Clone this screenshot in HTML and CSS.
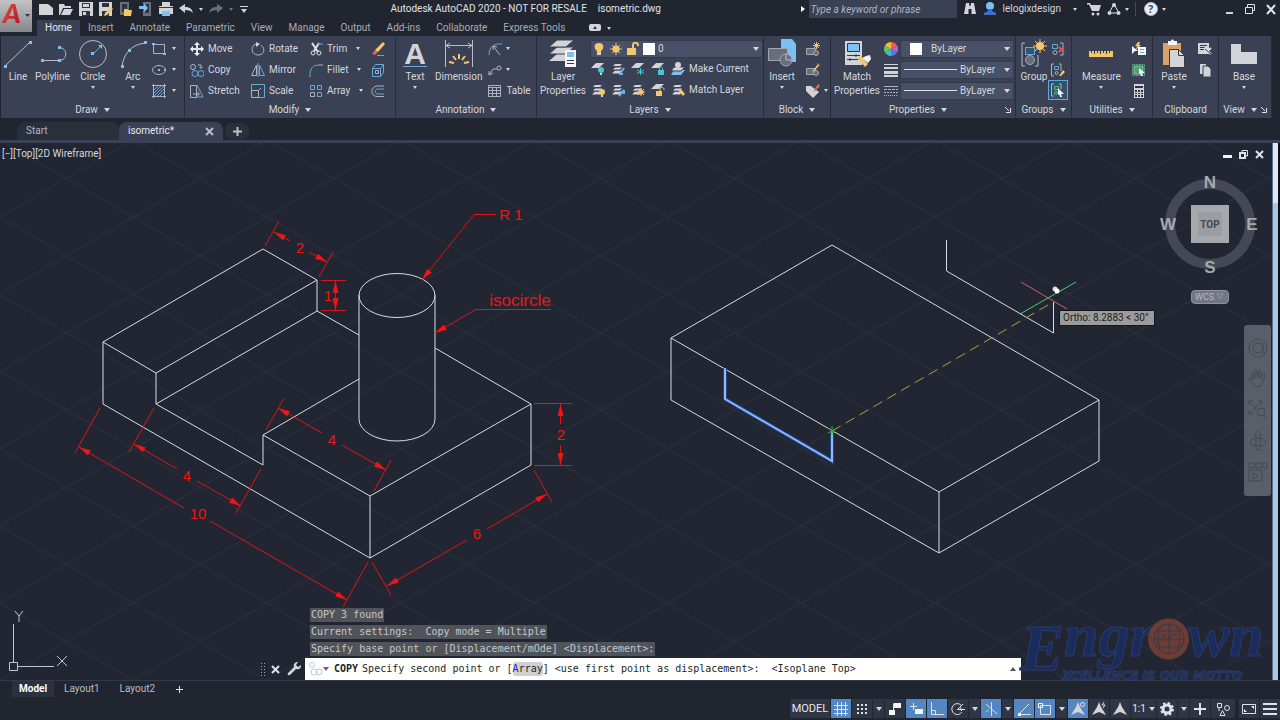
FILE: index.html
```html
<!DOCTYPE html>
<html lang="en">
<head>
  <meta charset="UTF-8">
  <meta name="viewport" content="width=device-width, initial-scale=1.0">
  <title>Autodesk AutoCAD 2020 - isometric.dwg</title>
  <link rel="stylesheet" href="styles.css">
</head>
<body>
  <!-- shared shapes -->
  <svg class="defs" width="0" height="0" aria-hidden="true">
    <defs>
      <linearGradient id="logoRed" x1="0" y1="0" x2="1" y2="1">
        <stop offset="0" stop-color="#f0554e"/><stop offset="1" stop-color="#a81218"/>
      </linearGradient>
      <symbol id="stack" viewBox="0 0 14 14">
        <path class="fg" d="M4 8.500h8l-3 3H1z"/><path class="fg st" d="M4 5h8l-3 3H1z"/><path class="fg st" d="M4 1.500h8l-3 3H1z"/>
      </symbol>
      <symbol id="sheet" viewBox="0 0 14 14"><path class="fg" d="M5 1h8L8 6H0z"/></symbol>
      <symbol id="tri" viewBox="0 0 14 14"><path class="fg" d="M7 0l2 5 5 8-7-3-7 3 5-8z"/></symbol>
    </defs>
  </svg>

  <div class="app">
    <header class="header">
      <button class="app-menu" aria-label="Application menu">
        <svg width="32" height="32"><text x="3" y="23" class="logo-a">A</text><path class="fd" d="M25 14h5l-2.500 3z"/></svg>
      </button>
      <div class="header-main">
        <div class="titlebar">
          <div class="quick-access">
            <button aria-label="New"><svg class="i" viewBox="0 0 14 14"><path class="fg" d="M0 2h9l5 4v7H0z"/></svg></button>
            <button aria-label="Open"><svg class="i" viewBox="0 0 14 14"><path class="fg" d="M0 2h5l1 2h6v2H4L1 13H0z"/><path class="fg" d="M5 7h9l-3 6H2z"/></svg></button>
            <button aria-label="Save"><svg class="i" viewBox="0 0 14 14"><path class="fg" d="M0 0h14v14H0z"/><path class="fd" d="M3 1h8v5H3zM3 9h8v5H3z"/><path class="fg" d="M4 10h3v3H4zM4 2h6v3H4z"/></svg></button>
            <button aria-label="Save as"><svg class="i" viewBox="0 0 14 14"><path class="fg" d="M0 0h13v14H0z"/><path class="fd" d="M3 1h7v4H3zM3 9h7v5H3z"/><path class="fy" d="M12 5l2 2-6 6-3 1 1-3z"/></svg></button>
            <button aria-label="Open from mobile"><svg class="i" viewBox="0 0 14 14"><path class="fm" d="M1 0h9v13H1z"/><path class="fd" d="M3 2h5v8H3z"/><path class="fy" d="M5 7h3l1 1h4l-1 6H5z"/></svg></button>
            <button aria-label="Save to mobile"><svg class="i" viewBox="0 0 14 14"><path class="fm" d="M4 0h8v14H4z"/><path class="fd" d="M6 2h4v9H6z"/><path class="fb" d="M0 4h5V1l4 5-4 4V7H0z"/></svg></button>
            <button aria-label="Plot"><svg class="i" viewBox="0 0 14 14"><path class="fg" d="M3 0h8v4h3v8H0V4h3z"/><path class="sd" d="M0 5.500h14"/><path class="fb" d="M3 9h8v5H3z"/></svg></button>
            <button aria-label="Undo"><svg class="i" viewBox="0 0 14 14"><path class="fg" d="M0 6l6-4v3c5 0 7 2 8 6-2-2-4-3-8-3v3z"/></svg></button>
            <i class="caret"></i>
            <button aria-label="Redo"><svg class="i" viewBox="0 0 14 14"><path class="fm" d="M14 6L8 2v3C3 5 1 7 0 11c2-2 4-3 8-3v3z"/></svg></button>
            <i class="caret dim"></i>
            <button class="slim" aria-label="Customize"><svg class="i" viewBox="0 0 14 14"><path class="fg" d="M3 4h8v1H3zM4 7h6l-3 4z"/></svg></button>
          </div>
          <div class="title"><span>Autodesk AutoCAD 2020 - NOT FOR RESALE</span><span>isometric.dwg</span></div>
          <div class="info-center">
            <i class="play"></i>
            <input class="search" type="text" placeholder="Type a keyword or phrase" aria-label="Search help">
            <button aria-label="Search"><svg class="i" viewBox="0 0 14 14"><path class="fg" d="M3 1h3l.500 3h1L8 1h3l2 11H8.500V7h-3v5H1z"/></svg></button>
            <button class="account"><svg class="i" viewBox="0 0 14 14"><circle class="fb" cx="7" cy="4" r="4"/><path class="fu" d="M5 7h4v2l4 2v2H1v-2l4-2z"/></svg>lelogixdesign<i class="caret"></i></button>
            <button aria-label="App store"><svg class="i" viewBox="0 0 14 14"><path class="fg" d="M0 1h3l1 2h10l-2 6H5L2 2.500H0z"/><circle class="fg" cx="6" cy="12" r="1.500"/><circle class="fg" cx="11" cy="12" r="1.500"/></svg></button>
            <button aria-label="Stay connected"><svg class="i" viewBox="0 0 14 14"><path class="w" d="M7 2l5 9H2z"/><circle class="fg" cx="7" cy="3" r="2"/><circle class="fg" cx="2.500" cy="11" r="2"/><circle class="fg" cx="11.500" cy="11" r="2"/></svg></button>
            <i class="caret"></i><i class="rule"></i>
            <button aria-label="Help"><svg class="i" viewBox="0 0 14 14"><circle cx="7" cy="7" r="6.500" fill="#e9edf5"/><text class="q" x="4" y="11">?</text></svg></button>
            <i class="caret"></i>
          </div>
          <div class="window-controls">
            <button aria-label="Minimize"><svg class="i" viewBox="0 0 14 14"><path class="fg" d="M4 10h7v2H4z"/></svg></button>
            <button aria-label="Restore"><svg class="i" viewBox="0 0 14 14"><path class="w" d="M4.500 5V2.500h7v6H10M2.500 5.500h7v6h-7z"/></svg></button>
            <button aria-label="Close"><svg class="i" viewBox="0 0 14 14"><path class="w2" d="M3 3l8 9M11 3l-8 9"/></svg></button>
          </div>
        </div>
        <nav class="menu">
          <button class="active">Home</button><button>Insert</button><button>Annotate</button><button>Parametric</button><button>View</button><button>Manage</button><button>Output</button><button>Add-ins</button><button>Collaborate</button><button>Express Tools</button>
          <button class="minimize" aria-label="Minimize ribbon"><svg width="12" height="8"><rect class="fg" width="12" height="7" rx="2"/><path class="fd" d="M4 5l2-3 2 3z"/></svg><i class="caret"></i></button>
        </nav>
      </div>
    </header>

    <section class="ribbon">
      <div class="panel draw">
        <div class="tools">
          <button class="big"><svg class="ib" viewBox="0 0 30 30"><path d="M2 28L27 4"/><path class="fb" d="M1 27h3v3H1zM26 3h3v3h-3z"/></svg>Line</button>
          <button class="big"><svg class="ib" viewBox="0 0 30 30"><path d="M5 22.500h17c9 0 9-13 0-13"/><path class="fb" d="M4 21h3v3H4zM21 21h3v3h-3zM21 8h3v3h-3z"/></svg>Polyline</button>
          <button class="big wide"><svg class="ib" viewBox="0 0 30 30"><circle cx="15" cy="16" r="13.500"/><path class="b" d="M15 16l8-8"/><path class="fb" d="M13 14h3v3h-3zM20 7h4v4z"/></svg>Circle<i class="caret"></i></button>
          <button class="big"><svg class="ib" viewBox="0 0 30 30"><path d="M4 28C6 15 14 6 28 5"/><path class="fb" d="M3 27h3v3H3zM10 11h3v3h-3zM26 3h3v3h-3z"/></svg>Arc<i class="caret"></i></button>
          <div class="stack">
            <button class="small" aria-label="Rectangle"><svg class="i" viewBox="0 0 14 14"><path d="M1.500 2.500h11v9h-11z"/><path class="fb" d="M0 1h3v2H0zM11 11h3v2h-3z"/></svg><i class="caret"></i></button>
            <button class="small" aria-label="Ellipse"><svg class="i" viewBox="0 0 14 14"><ellipse cx="7" cy="7" rx="6.500" ry="4.500"/><path class="fb" d="M6 6h2v2H6zM12 6h2v2h-2zM6 2h2v1H6z"/></svg><i class="caret"></i></button>
            <button class="small" aria-label="Hatch"><svg class="i" viewBox="0 0 14 14"><path d="M1.500 0v14M12.500 0v14M0 1.500h14M0 12.500h14"/><path class="b" d="M2 6l4-4M2 9l7-7M2 12l10-10M5 12l7-7M8 12l4-4"/></svg><i class="caret"></i></button>
          </div>
        </div>
        <button class="panel-title">Draw<i class="caret lg"></i></button>
      </div>

      <div class="panel modify">
        <div class="tools">
          <div class="stack c1">
            <button class="small"><svg class="i" viewBox="0 0 14 14"><path class="w2" d="M7 1v12M1 7h12"/><path class="fw" d="M7 0l3 3H4zM7 14l3-3H4zM0 7l3-3v6zM14 7l-3-3v6z"/></svg>Move</button>
            <button class="small"><svg class="i" viewBox="0 0 14 14"><circle cx="3" cy="4" r="2.500"/><path d="M8 2h3v3M9.500 4L11 5.500 12.500 4"/><circle class="b" cx="5" cy="10.500" r="3"/><circle class="b" cx="11" cy="10.500" r="3"/></svg>Copy</button>
            <button class="small"><svg class="i" viewBox="0 0 14 14"><path d="M.500 1.500h6v12h-6z"/><path class="b" d="M7 1l6 12H7"/><path d="M3 10h6M7.500 8l2 2-2 2"/></svg>Stretch</button>
          </div>
          <div class="stack c2">
            <button class="small"><svg class="i" viewBox="0 0 14 14"><path d="M5 2C-1 4 0 13 7 13c6 0 8-6 3-10"/><path class="fg" d="M5 0l4 2-4 3z"/></svg>Rotate</button>
            <button class="small"><svg class="i" viewBox="0 0 14 14"><path d="M5.500 2v10.500H.500z"/><path class="b" d="M7 0v14M8.500 2v10.500h5z"/></svg>Mirror</button>
            <button class="small"><svg class="i" viewBox="0 0 14 14"><path class="b" d="M.500 7V.500h13v13H7"/><path d="M.500 6.500h7v7h-7zM7 7l3-3"/></svg>Scale</button>
          </div>
          <div class="stack c3">
            <button class="small"><svg class="i" viewBox="0 0 14 14"><path class="w2" d="M3 1l6 9M10 1L5 9"/><path class="b" d="M8 2h6"/><circle class="w" cx="4" cy="11" r="2"/><circle class="w" cx="10" cy="11" r="2"/></svg>Trim<i class="caret"></i></button>
            <button class="small"><svg class="i" viewBox="0 0 14 14"><path class="b" d="M1 13C1 5 4 2 10 2"/><path d="M1 13v1M10 2h4"/></svg>Fillet<i class="caret"></i></button>
            <button class="small"><svg class="i" viewBox="0 0 14 14"><path class="b" d="M1.500 1.500h4v4h-4zM8.500 1.500h4v4h-4zM8.500 8.500h4v4h-4z"/><path d="M1.500 8.500h4v4h-4z"/></svg>Array<i class="caret"></i></button>
          </div>
          <div class="stack">
            <button class="small" aria-label="Erase"><svg class="i" viewBox="0 0 14 14"><path class="fy" d="M12 0l2 2-7 8-3-2z"/><path class="fr" d="M4 8l3 2-3 3-3-1z"/><path class="b" d="M6 13.500h7"/></svg></button>
            <button class="small" aria-label="Explode"><svg class="i" viewBox="0 0 14 14"><path class="b" d="M1.500 5.500h8v8h-8zM1.500 5.500l3-4h8v8l-3 4M9.500 5.500l3-4"/><path d="M4.500 7.500h3v3h-3z"/></svg></button>
            <button class="small" aria-label="Offset"><svg class="i" viewBox="0 0 14 14"><path d="M13 2H6C-1 3-1 12 6 12.500h7"/><path class="b" d="M13 5H7c-4 0-4 5 0 5h6"/></svg></button>
          </div>
        </div>
        <button class="panel-title">Modify<i class="caret lg"></i></button>
      </div>

      <div class="panel annotation">
        <div class="tools">
          <button class="big"><svg class="ib" viewBox="0 0 30 30"><text class="big-a" x="15" y="26">A</text><path class="b" d="M3 28.500h24"/></svg>Text<i class="caret"></i></button>
          <button class="big"><svg class="ib" viewBox="0 0 30 30"><path d="M1.500 2v27M28.500 2v27M2 7.500h26M6 5L2 7.500 6 10M24 5l4 2.500-4 2.500"/><path class="y2" d="M15 16v5M9 18l3 4M21 18l-3 4M5 24l5 1M25 24l-5 1"/></svg>Dimension</button>
          <div class="stack">
            <button class="small" aria-label="Linear"><svg class="i" viewBox="0 0 14 14"><path class="b" d="M1 13C1 5 6 1 14 2"/><path d="M5 4l7 9M5 4v4M5 4l4 1"/></svg><i class="caret"></i></button>
            <button class="small" aria-label="Leader"><svg class="i" viewBox="0 0 14 14"><path d="M1 12l4-6h4M1 12V8M1 12l4-2"/><circle cx="11" cy="5" r="2"/></svg><i class="caret"></i></button>
            <button class="small"><svg class="i" viewBox="0 0 14 14"><path d="M.500 1.500h12v11H.500zM0 3.500h13M0 6.500h13M0 9.500h13M4.500 3v10M8.500 3v10"/></svg>Table</button>
          </div>
        </div>
        <button class="panel-title">Annotation<i class="caret lg"></i></button>
      </div>

      <div class="panel layers">
        <div class="tools">
          <button class="big"><svg class="ib" viewBox="0 0 30 30"><path class="fg" d="M9 16h17l-8 7H1z"/><path class="fg st" d="M9 9h17l-8 7H1z"/><path class="fg st" d="M9 2h17l-8 7H1z"/><path class="fw" d="M17 12h11v17H17z"/><path class="fb" d="M19 14h7v5h-7z"/><path class="sd" d="M19 22.500h7M19 25.500h7"/></svg>Layer<br>Properties</button>
          <div class="layer-tools">
            <div class="combo">
              <svg class="i" viewBox="0 0 14 14"><path class="fy" d="M7 1c6 0 5 6 2 8v2H5V9C2 7 1 1 7 1z"/><path class="fg" d="M5 11h4v2H5z"/></svg>
              <svg class="i" viewBox="0 0 14 14"><circle class="fy" cx="7" cy="7" r="3.500"/><path class="y" d="M7 1v12M1 7h12M3 3l8 8M11 3l-8 8"/></svg>
              <svg class="i" viewBox="0 0 14 14"><path class="fy" d="M1 6h9v7H1z"/><path class="y2" d="M7 6V3c0-3 5-3 5 0v1"/></svg>
              <i class="swatch"></i>
              <select aria-label="Layer"><option>0</option></select><i class="caret lg"></i>
            </div>
            <div class="icon-row">
              <button aria-label="Layer off"><svg class="i" viewBox="0 0 14 14"><use href="#sheet"/><circle class="fc" cx="10" cy="8" r="3"/><path class="fg" d="M9 11h2v2H9z"/></svg></button>
              <button aria-label="Isolate"><svg class="i" viewBox="0 0 14 14"><use href="#stack"/><path class="b2" d="M13 6l-4 6M8 12h4"/></svg></button>
              <button aria-label="Freeze"><svg class="i" viewBox="0 0 14 14"><use href="#sheet"/><path class="c" d="M9.500 6v7M6 8l7 3.500M6 11.500L13 8"/></svg></button>
              <button aria-label="Lock"><svg class="i" viewBox="0 0 14 14"><use href="#sheet"/><path class="fc" d="M7 8h6v5H7z"/><path class="c" d="M8.500 8V6.500c0-2 3-2 3 0V8"/></svg></button>
              <button class="text"><svg class="i" viewBox="0 0 14 14"><path class="fb" d="M3 8h11l-4 5H0z"/><path class="fg st" d="M3 5h11l-4 4H0z"/><circle class="fg" cx="7" cy="3" r="3"/></svg>Make Current</button>
            </div>
            <div class="icon-row">
              <button aria-label="Turn all on"><svg class="i" viewBox="0 0 14 14"><use href="#stack"/><circle class="fy" cx="11" cy="9" r="3"/><path class="fg" d="M10 12h2v2h-2z"/></svg></button>
              <button aria-label="Unisolate"><svg class="i" viewBox="0 0 14 14"><use href="#stack"/><path class="b2" d="M13 7l-5 6M13 7v4"/></svg></button>
              <button aria-label="Thaw"><svg class="i" viewBox="0 0 14 14"><use href="#stack"/><circle class="fy" cx="10" cy="9" r="2.500"/><path class="y" d="M10 5v8M6 9h8M7 6l6 6M13 6l-6 6"/></svg></button>
              <button aria-label="Unlock"><svg class="i" viewBox="0 0 14 14"><use href="#sheet"/><path class="fy" d="M5 8h6v5H5z"/><path class="y" d="M9 8V6c0-2 4-2 4 0v1"/></svg></button>
              <button class="text"><svg class="i" viewBox="0 0 14 14"><use href="#stack"/><path class="fy" d="M7 7l3-1 4 5-2 2z"/></svg>Match Layer</button>
            </div>
          </div>
        </div>
        <button class="panel-title">Layers<i class="caret lg"></i></button>
      </div>

      <div class="panel block">
        <div class="tools">
          <button class="big"><svg class="ib" viewBox="0 0 30 30"><path class="fb" d="M14 1h11l4 5v18H14z"/><path class="fk" d="M1.500 10.500h19v12h-19z"/><circle class="fk" cx="19" cy="22" r="6"/><path d="M19 16v6h6"/></svg>Insert<i class="caret"></i></button>
          <div class="stack">
            <button class="small" aria-label="Create block"><svg class="i" viewBox="0 0 14 14"><path class="fk" d="M.500 6.500h9v6h-9z"/><circle class="fk" cx="10" cy="11" r="2.500"/><path class="y" d="M10.500 0v7M7 3.500h7M8 1l5 5M13 1L8 6"/></svg></button>
            <button class="small" aria-label="Edit block"><svg class="i" viewBox="0 0 14 14"><path class="fk" d="M.500 5.500h9v6h-9z"/><circle class="fk" cx="10" cy="10" r="2.500"/><path class="fy" d="M12 1l1 2-5 5-2 1z"/><path class="fr" d="M12 0l2 2-1 1-2-2z"/></svg></button>
            <button class="small" aria-label="Edit attributes"><svg class="i" viewBox="0 0 14 14"><path class="fg" d="M0 2h5l8 6-6 6-7-7z"/><path class="fr" d="M12 0l2 2-5 5-2 1z"/></svg><i class="caret"></i></button>
          </div>
        </div>
        <button class="panel-title">Block<i class="caret lg"></i></button>
      </div>

      <div class="panel properties">
        <div class="tools">
          <button class="big"><svg class="ib" viewBox="0 0 30 30"><path class="fg" d="M3 3h17v24H3z"/><path fill="#7fc0f5" stroke="#333" d="M5.500 5.500h12v8h-12z"/><path class="sd" d="M5 17.500h13M5 21.500h13M14 16v3M8 20v3"/><path class="fw" d="M20 20l4-2 4-1 1 4-3 4z"/><path class="fy" d="M15 20l4-2 7 8-3 3z"/></svg>Match<br>Properties</button>
          <div class="prop-rows">
            <div class="prop-row">
              <svg class="i" viewBox="0 0 14 14"><g stroke="none"><path fill="#f2604b" d="M7 7V0a7 7 0 0 1 6 3.500z"/><path fill="#c55bc6" d="M7 7l6-3.500a7 7 0 0 1 0 7z"/><path fill="#5a79e8" d="M7 7l6 3.500A7 7 0 0 1 7 14z"/><path fill="#3fb9c9" d="M7 7v7a7 7 0 0 1-6-3.500z"/><path fill="#69c653" d="M7 7l-6 3.500a7 7 0 0 1 0-7z"/><path fill="#f6b73c" d="M7 7L1 3.500A7 7 0 0 1 7 0z"/></g></svg>
              <div class="combo color"><i class="swatch"></i><select aria-label="Object color"><option>ByLayer</option></select><i class="caret lg"></i></div>
            </div>
            <div class="prop-row">
              <svg class="i" viewBox="0 0 14 14"><path class="fg" d="M0 1h14v1H0zM0 4h14v2H0zM0 8h14v3H0zM0 12h14v2H0z"/></svg>
              <div class="combo"><i class="line"></i><select aria-label="Lineweight"><option>ByLayer</option></select><i class="caret lg"></i></div>
            </div>
            <div class="prop-row">
              <svg class="i" viewBox="0 0 14 14"><path d="M0 2.500h14" /><path stroke-dasharray="3 1" d="M0 5.500h14"/><path stroke-dasharray="2 1" d="M0 8.500h14"/><path stroke-dasharray="1 1" d="M0 11.500h14"/></svg>
              <div class="combo"><i class="line"></i><select aria-label="Linetype"><option>ByLayer</option></select><i class="caret lg"></i></div>
            </div>
          </div>
        </div>
        <div class="title-row"><button class="panel-title">Properties<i class="caret lg"></i></button><button class="launcher" aria-label="Properties dialog"><svg width="6" height="6"><path class="w" d="M0 0l4 4M5.500 1v4.500H1"/></svg></button></div>
      </div>

      <div class="panel groups">
        <div class="tools">
          <button class="big"><svg class="ib" viewBox="0 0 30 30"><path d="M6 5H3v23h3M16 28h3V17"/><rect x="6.500" y="9.500" width="9" height="7" class="b" fill="#33536f"/><circle class="fk" cx="11" cy="22" r="4.500"/><circle class="fy" cx="21" cy="8" r="4"/><path class="y" d="M21 1v14M14 8h14M16 3l10 10M26 3L16 13"/></svg>Group</button>
          <div class="stack">
            <button class="small" aria-label="Ungroup"><svg class="i" viewBox="0 0 14 14"><path class="b" d="M1.500 2.500h5v4h-5z"/><circle cx="4" cy="10.500" r="2"/><path d="M9 1h3v12H9"/><path class="r" d="M8 5l5 5M13 5l-5 5"/></svg></button>
            <button class="small" aria-label="Group edit"><svg class="i" viewBox="0 0 14 14"><path d="M3 1H.500v12H3M8 1h2v7"/><path class="b" d="M3.500 3.500h4v3h-4z"/><circle cx="5.500" cy="10" r="1.500"/><path class="fy" d="M12 7l2 2-4 4H8z"/></svg></button>
            <button class="small on" aria-label="Group selection"><svg class="i" viewBox="0 0 14 14"><path d="M3 1H.500v12H3M8 1h2v5"/><path class="gr" d="M3.500 3.500h4v3h-4z"/><circle class="gr" cx="5" cy="10" r="1.500"/><path class="fw" d="M7 5l6 6-3 0 1 3-2 0-1-3-1 1z"/></svg></button>
          </div>
        </div>
        <button class="panel-title">Groups<i class="caret lg"></i></button>
      </div>

      <div class="panel utilities">
        <div class="tools">
          <button class="big"><svg class="ib" viewBox="0 0 30 30"><path class="fy" d="M3 13h24v6H3z"/><path class="sd" d="M5.500 13v2M8.500 13v3M11.500 13v2M14.500 13v3M17.500 13v2M20.500 13v3M23.500 13v2"/></svg>Measure<i class="caret"></i></button>
          <div class="stack">
            <button class="small" aria-label="Quick select"><svg class="i" viewBox="0 0 14 14"><path class="fy" d="M6 0h2L7 3h2L4 8l1-4H3z"/><path class="fw" d="M0 4l6 5-3 0-3 3zM6 5h8v8H6z"/><path class="b" d="M8 7.500h4M8 10.500h4"/></svg></button>
            <button class="small" aria-label="Select all"><svg class="i" viewBox="0 0 14 14"><path class="gr" stroke-dasharray="2 1" d="M.500 1.500h12v11H.500z"/><path fill="#4da36f" d="M2 3h9v8H2z"/><path class="fw" d="M7 5l6 5-3 0 1 3-2 0-1-3-1 1z"/></svg></button>
            <button class="small" aria-label="Calculator"><svg class="i" viewBox="0 0 14 14"><path class="fg" d="M2 0h10v14H2z"/><path class="fd" d="M3 2h8v2H3zM3 6h2v2H3zM6 6h2v2H6zM9 6h2v2H9zM3 9h2v1H3zM6 9h2v1H6zM9 9h2v1H9zM3 11h2v2H3zM6 11h2v2H6zM9 11h2v2H9z"/></svg></button>
          </div>
        </div>
        <button class="panel-title">Utilities<i class="caret lg"></i></button>
      </div>

      <div class="panel clipboard">
        <div class="tools">
          <button class="big"><svg class="ib" viewBox="0 0 30 30"><path fill="#d9a463" stroke="none" d="M4 5h18v22H4z"/><path class="fw" d="M9 3h3c0-2 3-2 3 0h3v4H9z"/><path class="fg sd" d="M10.500 11.500h9l6 6v12h-15z"/><path class="sd" d="M19.500 11.500v6h6"/></svg>Paste<i class="caret"></i></button>
          <div class="stack">
            <button class="small" aria-label="Cut"><svg class="i" viewBox="0 0 14 14"><path class="fg" d="M0 1h11v11H0z"/><path class="sd" d="M2 3.500h7M2 5.500h5M2 7.500h4"/><path class="w2" d="M6 6l7 6M13 6l-6 5"/><path class="sd" d="M7 7l6 5"/></svg></button>
            <button class="small" aria-label="Copy clip"><svg class="i" viewBox="0 0 14 14"><path class="fg" d="M2 1h6v10H2z"/><path class="fg st" d="M5 3h5l3 3v8H5z"/></svg></button>
          </div>
        </div>
        <div class="panel-title">Clipboard</div>
      </div>

      <div class="panel view">
        <div class="tools">
          <button class="big"><svg class="ib" viewBox="0 0 30 30"><path class="fg" d="M2 6h10v8h16v12H2z"/></svg>Base<i class="caret"></i></button>
        </div>
        <div class="title-row"><button class="panel-title">View<i class="caret lg"></i></button><button class="launcher" aria-label="View dialog"><svg width="6" height="6"><path class="w" d="M0 0l4 4M5.500 1v4.500H1"/></svg></button></div>
      </div>
    </section>

    <div class="file-tabs">
      <button class="file-tab">Start</button>
      <div class="file-tab active"><button>isometric*</button><button class="close" aria-label="Close tab"><svg width="9" height="9"><path d="M1 1l7 7M8 1L1 8"/></svg></button></div>
      <button class="new-tab" aria-label="New drawing"><svg width="9" height="9"><path d="M4.500 0v9M0 4.500h9"/></svg></button>
    </div>

    <main class="canvas">
      <svg class="drawing" viewBox="0 143 1280 537" preserveAspectRatio="xMinYMin slice">
        <defs>
          <pattern id="grid" x="66.500" y="178.500" width="133.600" height="77.200" patternUnits="userSpaceOnUse">
            <path d="M0 0l133.600 77.200M0 77.200L133.600 0" stroke="#2b303d" fill="none"/>
          </pattern>
          <marker id="arrow" viewBox="0 0 12 6" markerWidth="12" markerHeight="6" refX="12" refY="3" orient="auto-start-reverse" markerUnits="userSpaceOnUse">
            <path d="M0 0l12 3-12 3z" fill="#f01414"/>
          </marker>
        </defs>
        <rect y="143" width="1280" height="537" fill="url(#grid)"/>

        <!-- stepped block with cylinder -->
        <g class="solid">
          <path d="M103 342L263 249L317 280L156 373ZM103 342V404L370 558L531 465V404L370 496V558"/>
          <path d="M156 373V404L317 311V280M156 404L263 465V435L370 496M263 435L359 379M317 311L359 335M435 348L531 404"/>
          <ellipse cx="397" cy="295.500" rx="38" ry="22"/>
          <path d="M359 295V419A38 22 0 0 0 435 419V295"/>
        </g>

        <g class="dims">
          <path d="M265 246L279 221M319 277L333 252M321 280.500H346M321 310.500H346M534 403.500H572M534 465.500H572"/>
          <path d="M284 398L266 430M391 460L374 491M154 408L129 452M261 469L236 513M100 408L75 453M368 562L343 607M372 562L391 595M534 470L552 502"/>
          <g marker-end="url(#arrow)">
            <path d="M290 241L274 232"/><path d="M309 252L327 262"/>
            <path d="M335.500 296V281"/><path d="M335.500 296V310"/>
            <path d="M496 214.500H474L422 280"/><path d="M551 309.500H476L435 333"/>
            <path d="M560.500 424V404"/><path d="M560.500 445V465"/>
            <path d="M322 433L278 408"/><path d="M342 445L386 470"/>
            <path d="M177 469L134 444"/><path d="M197 481L241 506"/>
            <path d="M184 508L79 447"/><path d="M210 521L347 600"/>
            <path d="M467 540L387 586"/><path d="M487 529L547 494"/>
          </g>
          <text x="300" y="253">2</text><text x="328" y="301">1</text><text x="511" y="220">R 1</text>
          <text class="note" x="520" y="306">isocircle</text>
          <text x="561" y="440">2</text><text x="332" y="445">4</text><text x="187" y="481">4</text><text x="198" y="519">10</text><text x="477" y="539">6</text>
        </g>

        <!-- block being edited -->
        <g class="solid">
          <path d="M832 245L1099 400L939 492L671 338ZM671 338V400L939 553L1099 461V400M939 492V553"/>
          <path d="M946.500 240V271L1053.500 333V302"/>
        </g>
        <path class="glow" d="M725 368V399L832 461V431"/>
        <path class="picked" d="M725 368V399L832 461V431"/>
        <path class="track" d="M832 431L1053 302"/>
        <path stroke="#35b52f" d="M832 426v9M828 428l7 5M828 433l8-4"/>
        <path stroke="#4fce6d" d="M1020 314L1076 282"/>
        <path stroke="#c9636d" d="M1021 282L1067 309"/>
        <circle cx="1055" cy="289" r="2.500" fill="#ddd"/><circle cx="1057" cy="291" r="2.500" fill="#fff"/>
        <rect x="1059.500" y="310.500" width="95" height="15" fill="#9b9b9b" stroke="#15171d"/>
        <text class="tip" x="1063" y="321">Ortho: 8.2883 &lt; 30°</text>
      </svg>

      <button class="viewport-label">[−][Top][2D Wireframe]</button>
      <div class="viewport-controls">
        <button aria-label="Minimize viewport"><svg width="9" height="9"><path class="fw" d="M0 5h9v3H0z"/></svg></button>
        <button aria-label="Restore viewport"><svg width="9" height="9"><path class="w" d="M3 3V.500h5.500V6H7"/><path class="w2" d="M1 3h5v5H1z"/></svg></button>
        <button aria-label="Close viewport"><svg width="9" height="9"><path class="w2" d="M1 1l7 7M8 1L1 8"/></svg></button>
      </div>

      <div class="view-cube">
        <svg width="104" height="104">
          <circle cx="52" cy="52" r="40" fill="none" stroke="#444955" stroke-width="10"/>
          <path fill="#a7a8ac" d="M33 33h38v38H33z"/><path fill="#9b9da3" d="M40 40h24v24H40z"/>
          <g class="compass"><text x="52" y="16">N</text><text x="52" y="101">S</text><text x="10" y="58">W</text><text x="94" y="58">E</text></g>
          <text class="face" x="52" y="56">TOP</text>
        </svg>
        <button class="wcs">WCS<svg width="9" height="8"><path d="M1 1h6l-3 5z"/></svg></button>
      </div>

      <div class="nav-bar">
        <button aria-label="Navigation wheel"><svg viewBox="0 0 20 20"><circle cx="10" cy="10" r="9"/><circle cx="10" cy="10" r="5"/><path d="M15 5v10h3"/></svg></button>
        <button aria-label="Pan"><svg viewBox="0 0 20 20"><path d="M6 17L1 10c0-2 2-1 4 1L4 4c1-2 2-1 3 5V2c1-2 2-1 2 0l1 7 1-7c1-1 2-1 2 1l-1 7 3-5c2-1 2 0 2 1l-3 8-2 4z"/></svg></button>
        <button aria-label="Zoom extents"><svg viewBox="0 0 20 20"><path d="M1 1l7 8M14 1L1 14M1 5V1h4M10 1h4v4M1 10v4h4"/><circle cx="13" cy="12" r="4"/><path d="M16 15l3 4"/></svg></button>
        <button aria-label="Orbit"><svg viewBox="0 0 20 20"><ellipse cx="10" cy="11" rx="8" ry="4"/><path d="M8 19V4H6l4-4 4 4h-2v15z"/></svg></button>
        <button aria-label="Show motion"><svg viewBox="0 0 20 20"><path d="M1 1h5v5H1zM8 1h5v5H8zM15 1h4v5h-4zM1 8h13v11H1z"/><path d="M5 11l5 3-5 3z"/></svg></button>
      </div>

      <svg class="ucs" width="70" height="62">
        <path d="M4.500 51V13M9 55.500H45M.500 51.500h8v8h-8zM6 0l4 5 4-5M10 5v6M48 45l10 10M58 45L48 55"/>
      </svg>

      <svg class="watermark" width="250" height="80" viewBox="1018 610 250 80">
        <text class="cap" x="1020" y="670">E</text><text class="word" x="1064" y="656">ngr</text>
        <circle cx="1168.500" cy="639" r="20.500" fill="#6c3c35"/>
        <path d="M1154 639a15 15 0 1 0 30 0a15 15 0 1 0-30 0M1154 639h30M1156 631h26M1156 647h26M1169 624v30M1161 626q-6 13 0 26M1177 626q6 13 0 26M1162 636c4-4 4 8 7 4s4-8 8-5" fill="none" stroke="#373a46"/>
        <text class="word" x="1188" y="656">wn</text>
        <text class="motto" x="1062" y="680">XCELLENCE IS OUR MOTTO</text>
      </svg>

      <div class="command">
        <ul class="history">
          <li>COPY 3 found</li>
          <li>Current settings:&nbsp; Copy mode = Multiple</li>
          <li>Specify base point or [Displacement/mOde] &lt;Displacement&gt;:</li>
        </ul>
        <div class="command-bar">
          <i class="grip"></i>
          <button aria-label="Close command line"><svg width="9" height="9"><path class="w2" d="M1 1l7 7M8 1L1 8"/></svg></button>
          <button aria-label="Customize command line"><svg width="14" height="14" viewBox="0 0 14 14"><path class="fg" d="M1 11l6-6c-1-3 1-5 4-5L9 3l2 2 3-2c0 4-2 5-5 4l-6 6c-2 1-3-1-2-2z"/></svg></button>
          <div class="prompt">
            <svg width="14" height="14" viewBox="0 0 14 14" fill="none" stroke="#a9cfe6"><circle cx="3" cy="3" r="2.500"/><circle cx="5" cy="10" r="3"/><circle cx="10" cy="10" r="3"/></svg>
            <i class="caret lg"></i>
            <b>COPY</b>
            <span>Specify second point or [<button class="option"><em>A</em>rray</button>] &lt;use first point as displacement&gt;:&nbsp; &lt;Isoplane Top&gt;</span>
            <button class="expand" aria-label="Expand history"><svg width="7" height="5"><path d="M0 4h6L3 0z" fill="#555"/></svg></button>
          </div>
        </div>
      </div>
      <i class="scroll"></i>
    </main>

    <div class="layout-tabs">
      <button class="active">Model</button><button>Layout1</button><button>Layout2</button>
      <button aria-label="New layout"><svg width="9" height="9"><path class="w" d="M4.500 1v7M1 4.500h7"/></svg></button>
    </div>

    <footer class="status">
      <button class="model">MODEL</button>
      <button class="on" aria-label="Grid"><svg class="i" viewBox="0 0 14 14"><path class="w" d="M3.500 0v14M7.500 0v14M11.500 0v14M0 3.500h14M0 7.500h14M0 11.500h14"/></svg></button>
      <button aria-label="Snap"><svg class="i" viewBox="0 0 14 14"><path class="w2" stroke-dasharray="2 2" d="M2 3h10M2 7h10M2 11h10"/></svg></button>
      <button class="drop" aria-label="Snap options"><i class="caret lg"></i></button>
      <button aria-label="Infer constraints"><svg class="i" viewBox="0 0 14 14"><path class="w" d="M5.500 8V1.500"/><path class="fw" d="M6 1h7v5H6zM1 8h6v5H1z"/></svg></button>
      <button class="on" aria-label="Dynamic input"><svg class="i" viewBox="0 0 14 14"><path class="w" d="M4.500 1v7M1 4.500h7"/><path class="fw" d="M6 7h8v5H6z"/></svg></button>
      <button class="on" aria-label="Ortho"><svg class="i" viewBox="0 0 14 14"><path class="w" d="M1.500 0v12.500H14M2 8.500h3.500v4"/></svg></button>
      <button aria-label="Polar tracking"><svg class="i" viewBox="0 0 14 14"><path class="w" d="M10 3A5.500 5.500 0 1 0 11 10M6.500 7.500H14M6.500 7.500L12 2M9 5c1 1 1.500 2 1.500 4"/></svg></button>
      <button class="drop" aria-label="Polar options"><i class="caret lg"></i></button>
      <button class="on" aria-label="Isometric drafting"><svg class="i" viewBox="0 0 14 14"><path class="w" d="M7.500 0v14M2 2l11 10"/><path stroke="#9be07d" d="M2 10l3-2"/></svg></button>
      <button class="drop" aria-label="Isoplane options"><i class="caret lg"></i></button>
      <button class="on" aria-label="Object snap tracking"><svg class="i" viewBox="0 0 14 14"><path class="w" d="M2 12L12 2M2 12.500h12"/><path class="fw" d="M1 11h3v3H1z"/></svg></button>
      <button class="on" aria-label="Object snap"><svg class="i" viewBox="0 0 14 14"><path class="w" d="M2.500 3.500h10v9h-10z"/><path stroke="#fff" d="M.500 1.500h4v4h-4z"/></svg></button>
      <button class="drop" aria-label="Object snap options"><i class="caret lg"></i></button>
      <button class="on" aria-label="Annotation visibility"><svg class="i" viewBox="0 0 14 14"><use href="#tri"/><circle class="w" cx="11.500" cy="2.500" r="2"/></svg></button>
      <button aria-label="Auto scale"><svg class="i" viewBox="0 0 14 14"><use href="#tri"/><path class="w" d="M12 0l-2 3h3l-2 3"/></svg></button>
      <button aria-label="Annotation scale"><svg class="i" viewBox="0 0 14 14"><use href="#tri"/></svg></button>
      <button class="scale">1:1<i class="caret lg"></i></button>
      <button aria-label="Workspace"><svg class="i" viewBox="0 0 14 14"><circle cx="7" cy="7" r="4" stroke="#dfe2e8" stroke-width="3"/><circle cx="7" cy="7" r="6" stroke="#dfe2e8" stroke-width="2" stroke-dasharray="2.400 2.300"/></svg></button>
      <button class="drop" aria-label="Workspace options"><i class="caret lg"></i></button>
      <button aria-label="Annotation monitor"><svg class="i" viewBox="0 0 14 14"><path class="w2" d="M7 1v12M1 7h12"/></svg></button>
      <button class="iso" aria-label="Isolate objects"><svg class="i" viewBox="0 0 14 14"><path class="w" d="M1.500 1.500h4v4h-4zM4 13.500l2.500-5 2.500 5zM3 6v3"/><circle class="w" cx="11" cy="6" r="2.500"/></svg></button>
      <i class="gap"></i>
      <button aria-label="Clean screen"><svg class="i" viewBox="0 0 14 14"><path class="w" d="M.500 2.500h13v9H.500z"/><path class="fw" d="M9 4h3v3zM2 10V7l3 3z"/></svg></button>
      <button aria-label="Customization"><svg class="i" viewBox="0 0 14 14"><path class="w2" d="M0 2h14M0 7h14M0 12h14"/></svg></button>
    </footer>
  </div>
</body>
</html>
```

FILE: styles.css
```css
* { box-sizing: border-box; }

body {
  margin: 0;
  background: #20252f;
  color: #d4d7de;
  font-family: Roboto, "Liberation Sans", sans-serif;
  font-size: 10px;
  line-height: 14px;
}

button {
  margin: 0;
  padding: 0;
  border: 0;
  background: none;
  color: inherit;
  font: inherit;
  cursor: pointer;
  white-space: nowrap;
}

.defs { position: absolute; }

.app {
  display: flex;
  flex-direction: column;
  height: 100vh;
  overflow: hidden;
}

/* icons */
svg { display: block; flex: none; }
.i { width: 14px; height: 14px; fill: none; stroke: #aeb3bd; }
.ib { width: 30px; height: 30px; fill: none; stroke: #b9bdc7; }
.b { stroke: #69a9d8; }
.b2 { stroke: #69b4ea; stroke-width: 2; }
.c { stroke: #4fc3cf; }
.r { stroke: #e0524c; stroke-width: 2; }
.y { stroke: #f3c76c; }
.y2 { stroke: #f3c76c; stroke-width: 2; fill: none; }
.gr { stroke: #4fc084; }
.sd { stroke: #343946; }
.w { stroke: #dfe2e8; fill: none; }
.w2 { stroke: #dfe2e8; stroke-width: 2; fill: none; }
.fg { fill: #d3d4d8; stroke: none; }
.st { stroke: #3b4154; }
.fg.sd { stroke: #343946; }
.fw { fill: #f4f5f7; stroke: none; }
.fm { fill: #6a6f7a; stroke: none; }
.fd { fill: #30343f; stroke: none; }
.fb { fill: #7cc0f3; stroke: none; }
.fu { fill: #3d6fd0; stroke: none; }
.fc { fill: #4fc3cf; stroke: none; }
.fy { fill: #f3c76c; stroke: none; }
.fr { fill: #e5664f; stroke: none; }
.fk { fill: #696e7a; stroke: #a3a7b0; }
.big-a { font: bold 30px "Liberation Sans", sans-serif; fill: #d3d4d8; stroke: none; text-anchor: middle; }
.q { font: bold 11px "Open Sans", sans-serif; fill: #2c4d9a; stroke: none; }
.logo-a { font: italic 900 27px Lato, sans-serif; fill: url(#logoRed); }

.caret {
  flex: none;
  width: 0;
  height: 0;
  border: 2px solid transparent;
  border-top: 3px solid #d4d7de;
  border-bottom: 0;
}
.caret.lg { border-width: 3px; border-top-width: 4px; border-bottom: 0; }
.caret.dim { border-top-color: #70757f; }

/* title bar */
.header { display: flex; flex: none; height: 36px; }
.app-menu {
  width: 32px;
  height: 32px;
  background: linear-gradient(#c4c4c6, #85868a);
}
.header-main { flex: 1; display: flex; flex-direction: column; }
.titlebar { display: flex; align-items: center; height: 18px; }
.quick-access { display: flex; align-items: center; gap: 6px; padding-left: 7px; }
.quick-access .slim { margin-left: -2px; }
.title {
  flex: 1;
  display: flex;
  justify-content: center;
  gap: 11px;
  color: #e0e3e9;
}
.info-center { display: flex; align-items: center; gap: 4px; }
.play { border: 3px solid transparent; border-left: 4px solid #fff; border-right: 0; }
.search {
  width: 148px;
  height: 18px;
  padding: 0 2px;
  border: 0;
  background: #3b4154;
  color: #d4d7de;
  font: italic 10px Roboto, sans-serif;
}
.search::placeholder { color: #b0b4be; }
.info-center button { margin-left: 2px; }
.account { display: flex; align-items: center; gap: 6px; }
.account .caret { margin: 0 4px 0 6px; }
.rule { width: 1px; height: 14px; margin: 0 2px; background: #454a57; }
.window-controls { display: flex; gap: 7px; margin-left: 56px; padding-right: 2px; }

.menu { display: flex; align-items: flex-end; height: 18px; padding-left: 5px; color: #a9adb7; }
.menu button { height: 16px; padding: 0 8px; }
.menu .active { background: #3b4154; color: #e6e8ee; }
.menu .minimize { display: flex; align-items: center; gap: 6px; margin-left: 8px; }

/* ribbon */
.ribbon { display: flex; flex: none; padding-left: 1px; }
.panel {
  flex: none;
  display: flex;
  flex-direction: column;
  height: 82px;
  padding-top: 2px;
  background: #3b4154;
  border-right: 1px solid #272c38;
}
.draw { width: 184px; }
.modify { width: 211px; }
.annotation { width: 141px; }
.layers { width: 227px; }
.block { width: 67px; }
.properties { width: 185px; }
.groups { width: 56px; }
.utilities { width: 81px; }
.clipboard { width: 66px; }
.view { width: 53px; }

.tools { display: flex; flex: none; height: 63px; }
.big {
  display: flex;
  flex-direction: column;
  align-items: center;
  justify-content: flex-start;
  min-width: 34px;
  line-height: 14px;
}
.big .ib { margin-bottom: 2px; }
.big .caret { margin-top: 2px; }
.big.wide { min-width: 46px; }
.stack { display: flex; flex-direction: column; }
.small { display: flex; align-items: center; gap: 4px; height: 21px; }
.draw .stack { padding-left: 2px; }
.draw .small, .annotation .small { gap: 6px; }
.annotation .small { gap: 4px; }
.modify .tools { padding-left: 5px; }
.modify .c1 { width: 61px; }
.modify .c2 { width: 58px; }
.modify .c3 { width: 62px; }
.c3 .caret { margin-left: 5px; }
.annotation .tools { padding-left: 2px; gap: 3px; }
.annotation .stack { padding-left: 3px; }
.layers .tools { padding-left: 3px; gap: 4px; }
.block .tools { padding-left: 1px; gap: 3px; }
.block .stack { padding-left: 4px; }
.properties .tools { padding-left: 3px; gap: 4px; }
.groups .tools { padding-left: 1px; }
.utilities .tools { padding-left: 10px; }
.utilities .stack { padding-left: 11px; }
.clipboard .tools { padding-left: 4px; gap: 7px; }
.view .tools { padding-left: 8px; }
.small.on {
  width: 20px;
  height: 20px;
  margin-left: -3px;
  justify-content: center;
  border: 1px solid #5fa8dc;
  background: #34506b;
}

.combo {
  display: flex;
  align-items: center;
  flex: 1;
  height: 18px;
  padding: 0 3px;
  background: #485167;
  border: 1px solid #343a4a;
}
.combo select {
  flex: 1;
  min-width: 0;
  height: 14px;
  padding: 0;
  border: 0;
  appearance: none;
  background: transparent;
  color: #d4d7de;
  font: inherit;
}
.swatch { width: 12px; height: 12px; background: #fff; }
.layer-tools { display: flex; flex-direction: column; gap: 1px; padding-top: 2px; width: 173px; }
.layer-tools .combo { flex: none; gap: 3px; height: 18px; }
.layer-tools .combo .i:first-child { margin-left: -2px; }
.icon-row { display: flex; align-items: center; gap: 6px; height: 20px; padding-left: 1px; }
.icon-row .text { display: flex; align-items: center; gap: 4px; }
.prop-rows { display: flex; flex-direction: column; width: 130px; }
.prop-row { display: flex; align-items: center; gap: 2px; height: 21px; }
.combo.color { padding-left: 9px; }
.combo.color select { margin-left: 9px; }
.line { width: 53px; height: 1px; margin-right: 3px; background: #dfe2e8; }

.panel-title {
  display: flex;
  align-items: center;
  justify-content: center;
  gap: 6px;
  width: 100%;
  height: 17px;
}
.title-row { display: flex; align-items: center; }
.title-row .panel-title { flex: 1; }
.launcher { padding: 0 4px 0 0; }

/* drawing tabs */
.file-tabs {
  display: flex;
  flex: none;
  height: 25px;
  padding: 4px 0 0 17px;
  border-bottom: 3px solid #3b4154;
}
.file-tabs svg { fill: none; stroke: #b9bdc6; stroke-width: 2; }
.file-tab {
  display: flex;
  align-items: center;
  justify-content: space-between;
  width: 102px;
  height: 18px;
  padding: 0 9px;
  border-radius: 8px 8px 0 0;
  background: #2a2f3c;
  color: #b3b7c0;
  text-align: left;
}
.file-tab.active { width: 104px; background: #3b4154; color: #e6e8ee; }
.new-tab { display: flex; align-items: center; justify-content: center; width: 24px; height: 16px; margin: 1px 0 0 2px; border-radius: 6px; background: #2a2f3c; }

/* model space */
.canvas { position: relative; flex: 1; min-height: 0; background: #212632; }
.drawing { position: absolute; width: 100%; height: 100%; fill: none; }
.solid { stroke: #d9dce2; }
.dims { stroke: #e01414; }
.dims text {
  fill: #f01414;
  stroke: none;
  font: 15px "Liberation Sans", sans-serif;
  text-anchor: middle;
}
.dims .note { font-size: 17px; }
.glow { stroke: #1f4488; stroke-width: 4; }
.picked { stroke: #8fb6ff; stroke-width: 2; }
.track { stroke: #b8963c; stroke-dasharray: 10 6; }
.tip { fill: #1c1e24; font-size: 10px; }

.viewport-label { position: absolute; left: 2px; top: 4px; }
.viewport-controls { position: absolute; right: 16px; top: 7px; display: flex; gap: 7px; }
.view-cube { position: absolute; right: 18px; top: 29px; display: flex; flex-direction: column; align-items: center; }
.compass { font: bold 17px "Liberation Sans", sans-serif; fill: #a7a9af; text-anchor: middle; }
.face { font: bold 10px Roboto, sans-serif; fill: #454a57; text-anchor: middle; }
.wcs {
  display: flex;
  align-items: center;
  justify-content: space-between;
  width: 38px;
  height: 14px;
  margin-top: 14px;
  padding: 0 3px;
  border: 1px solid #8f929e;
  border-radius: 4px;
  background: #737685;
  color: #b6b8c2;
  font-size: 9px;
}
.wcs svg { fill: none; stroke: #9396a3; }
.nav-bar {
  position: absolute;
  right: 9px;
  top: 182px;
  display: flex;
  flex-direction: column;
  align-items: center;
  gap: 11px;
  width: 27px;
  padding: 13px 0 14px;
  border-radius: 3px;
  background: #5a5e68;
}
.nav-bar svg { width: 20px; height: 20px; fill: none; stroke: #444853; }
.scroll {
  position: absolute;
  right: 0;
  top: 0;
  bottom: 0;
  width: 8px;
  background: #a9c6e3;
  border-left: 1px solid #59708a;
  border-right: 2px solid #0c0e13;
}
.scroll::before { content: ""; display: block; height: 60px; background: #dce8f4; }
.ucs { position: absolute; left: 9px; bottom: 7px; fill: none; stroke: #c3c6cd; }

.watermark { position: absolute; right: 12px; bottom: -10px; z-index: 2; pointer-events: none; overflow: visible; }
.watermark text { fill: #1b2c5c; stroke: #2a3d6b; font-family: "Liberation Serif", serif; font-style: italic; font-weight: bold; }
.watermark .cap { font-size: 66px; }
.watermark .word { font-size: 62px; }
.watermark .motto { font: italic bold 12px "DejaVu Sans", sans-serif; fill: #212a48; }

/* command line */
.command {
  position: absolute;
  left: 257px;
  right: 259px;
  bottom: 0;
  font-family: "DejaVu Sans Mono", monospace;
}
.history {
  display: flex;
  flex-direction: column;
  align-items: flex-start;
  gap: 3px;
  margin: 0 0 2px;
  padding: 0 0 0 53px;
  list-style: none;
}
.history li { padding: 0 1px; background: #50535a; color: #c5c7cc; white-space: pre; }
.command-bar { display: flex; align-items: center; gap: 7px; height: 22px; padding-left: 3px; }
.grip { width: 5px; height: 14px; margin-right: -1px; background: radial-gradient(#a3a7b0 1px, transparent 1px) 0 0 / 3px 3px; }
.prompt {
  flex: 1;
  display: flex;
  align-items: center;
  align-self: stretch;
  margin-left: -3px;
  padding: 0 4px;
  background: #fff;
  color: #1d1f26;
  white-space: pre;
}
.prompt .caret { margin: 0 5px 0 0; border-top-color: #666; }
.prompt b { margin-right: 4px; }
.option { border-radius: 3px; background: #d0d0d0; }
.option em { color: #2323c0; font-style: normal; }
.expand { margin-left: auto; }

/* bottom bars */
.layout-tabs { display: flex; flex: none; height: 17px; padding-left: 12px; border-top: 1px solid #343946; color: #b9bdc6; }
.layout-tabs button { padding: 0 10px; }
.layout-tabs .active { padding: 0 7px; background: #2c3140; color: #fff; font-weight: bold; }
.status { display: flex; flex: none; align-items: center; justify-content: flex-end; gap: 1px; height: 23px; color: #e6e8ee; }
.status button {
  display: flex;
  align-items: center;
  justify-content: center;
  width: 20px;
  height: 19px;
  background: #303543;
}
.status .on { background: #5486c2; }
.status .drop { width: 11px; }
.status .model { width: 40px; font-size: 11px; }
.status .scale { width: 25px; gap: 3px; }
.status .iso { width: 24px; }
.gap { width: 2px; }
```
